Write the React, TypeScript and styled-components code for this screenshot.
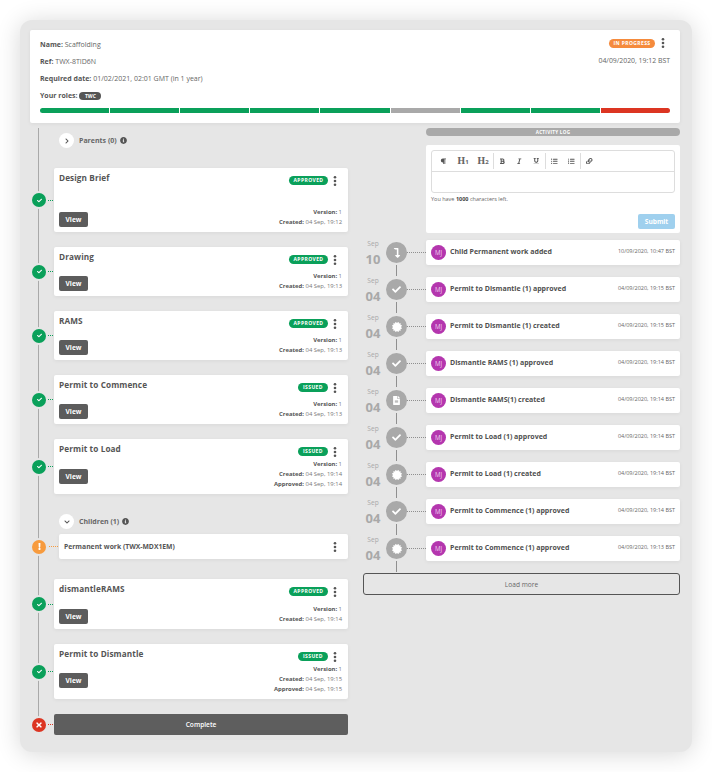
import React from "react";
import styled, { createGlobalStyle } from "styled-components";
import {
  FaBold,
  FaCertificate,
  FaCheck,
  FaChevronDown,
  FaChevronRight,
  FaExclamation,
  FaFileAlt,
  FaInfoCircle,
  FaItalic,
  FaLevelDownAlt,
  FaLink,
  FaListOl,
  FaListUl,
  FaParagraph,
  FaTimes,
  FaUnderline,
} from "react-icons/fa";

const GREEN = "#0aa05a";
const ORANGE = "#f79b3e";
const RED = "#dc3522";
const GREY = "#a9a9a9";

const GlobalStyle = createGlobalStyle`
  html, body {
    margin: 0;
    background: #fff;
  }
  body {
    font-family: "Open Sans", "Liberation Sans", sans-serif;
    color: #555;
  }
`;

const Page = styled.div`
  width: 712px;
  height: 772px;
  padding: 20px;
  box-sizing: border-box;
  overflow: hidden;
`;

const Panel = styled.div`
  height: 732px;
  padding: 10px 12px 10px 10px;
  box-sizing: border-box;
  background: #e6e6e6;
  border-radius: 12px;
  box-shadow: 0 2px 24px rgba(0, 0, 0, 0.16);
`;

const Header = styled.div`
  padding: 6px 10px 10px;
  background: #fff;
  border-radius: 2px;
  box-shadow: 0 1px 4px rgba(0, 0, 0, 0.06);
`;

const HeaderTop = styled.div`
  display: flex;
  justify-content: space-between;
`;

const InfoLine = styled.div`
  height: 17px;
  line-height: 17px;
  font-size: 7px;
  color: #666;
  white-space: nowrap;
  b {
    font-weight: 700;
    color: #555;
  }
`;

const RolePill = styled.span`
  display: inline-block;
  width: 22px;
  height: 8px;
  border-radius: 4px;
  background: #555;
  color: #fff;
  font-size: 5px;
  font-weight: 700;
  line-height: 8px;
  text-align: center;
  vertical-align: 0;
`;

const HeaderSide = styled.div`
  display: flex;
  flex-direction: column;
  align-items: flex-end;
`;

const StatusRow = styled.div`
  display: flex;
  align-items: center;
  gap: 6px;
  height: 12px;
  margin-top: 1px;
  padding-right: 5px;
`;

const Badge = styled.span<{ $color: string; $width: number }>`
  display: block;
  width: ${(p) => p.$width}px;
  height: 9px;
  border-radius: 5px;
  background: ${(p) => p.$color};
  color: #fff;
  font-size: 5px;
  font-weight: 700;
  letter-spacing: 0.4px;
  line-height: 9px;
  text-align: center;
`;

const HeaderDate = styled.div`
  margin-top: 7px;
  font-size: 6.9px;
  line-height: 10px;
  color: #666;
`;

const Progress = styled.div`
  display: flex;
  gap: 1px;
  height: 5px;
  margin-top: 4px;
  border-radius: 3px;
  overflow: hidden;
`;

const Segment = styled.div<{ $color: string }>`
  flex: 1;
  background: ${(p) => p.$color};
`;

const Columns = styled.div`
  display: grid;
  grid-template-columns: 318px 317px;
  gap: 15px;
  margin-top: 5px;
`;

const Flow = styled.div`
  position: relative;
  display: flex;
  flex-direction: column;
  gap: 15px;
  padding-top: 5px;
  &::before {
    content: "";
    position: absolute;
    left: 8px;
    top: 0;
    height: 595px;
    width: 1px;
    background: ${GREY};
  }
`;

const ToggleRow = styled.div`
  display: flex;
  align-items: center;
  height: 15px;
  margin-left: 29px;
  font-size: 7px;
  font-weight: 700;
  color: #666;
`;

const Toggle = styled.span`
  display: flex;
  align-items: center;
  justify-content: center;
  width: 15px;
  height: 15px;
  margin-right: 5px;
  border-radius: 50%;
  background: #fff;
  color: #555;
  font-size: 6px;
`;

const InfoIcon = styled(FaInfoCircle)`
  margin-left: 3px;
  font-size: 7px;
  color: #555;
`;

const ParentsGroup = styled.div`
  margin-bottom: 5px;
`;

const ChildrenGroup = styled.div`
  display: flex;
  flex-direction: column;
  gap: 5px;
  margin: 5px 0;
`;

const StepRow = styled.div`
  display: flex;
  align-items: center;
`;

const Node = styled.span<{ $color: string; $icon?: number }>`
  position: relative;
  z-index: 1;
  flex: none;
  display: flex;
  align-items: center;
  justify-content: center;
  width: 14px;
  height: 14px;
  margin-left: 2px;
  border-radius: 50%;
  background: ${(p) => p.$color};
  box-shadow: 0 0 0 2px #e6e6e6;
  color: #fff;
  font-size: ${(p) => p.$icon ?? 5}px;
`;

const Link = styled.span<{ $color: string; $wide?: boolean }>`
  flex: none;
  width: ${(p) => (p.$wide ? 9 : 5)}px;
  margin: 0 1px 0 ${(p) => (p.$wide ? 3 : 2)}px;
  border-top: 1px dotted ${(p) => p.$color};
`;

const StepCard = styled.div`
  flex: 1;
  display: flex;
  justify-content: space-between;
  padding: 5px 6px 5px 5px;
  background: #fff;
  border-radius: 2px;
  box-shadow: 0 1px 4px rgba(0, 0, 0, 0.06);
`;

const StepTitle = styled.div`
  height: 10px;
  font-size: 8.2px;
  font-weight: 700;
  line-height: 10px;
  letter-spacing: 0.1px;
  color: #555;
`;

const ViewButton = styled.button<{ $gap: number }>`
  display: block;
  width: 29px;
  height: 15px;
  margin-top: ${(p) => p.$gap}px;
  padding: 0;
  border: 0;
  border-radius: 2px;
  background: #5c5c5c;
  color: #fff;
  font-family: inherit;
  font-size: 6.6px;
  font-weight: 700;
`;

const StepSide = styled.div`
  display: flex;
  flex-direction: column;
  align-items: flex-end;
  justify-content: space-between;
`;

const BadgeRow = styled.div`
  display: flex;
  align-items: center;
  gap: 5px;
  height: 15px;
  padding-right: 5px;
`;

const Meta = styled.div`
  font-size: 5.9px;
  line-height: 10px;
  text-align: right;
  color: #777;
  b {
    font-weight: 700;
    color: #555;
  }
`;

const ChildCard = styled.div`
  flex: 1;
  display: flex;
  align-items: center;
  justify-content: space-between;
  height: 25px;
  padding: 0 11px 0 5px;
  background: #fff;
  border-radius: 2px;
  box-shadow: 0 1px 4px rgba(0, 0, 0, 0.06);
  font-size: 6.8px;
  font-weight: 700;
  color: #555;
`;

const CompleteButton = styled.button`
  flex: 1;
  height: 21px;
  padding: 0;
  border: 0;
  border-radius: 2px;
  background: #5e5e5e;
  color: #fff;
  font-family: inherit;
  font-size: 6.6px;
  font-weight: 600;
`;

const Activity = styled.div`
  display: flex;
  flex-direction: column;
`;

const LogBar = styled.div`
  align-self: flex-end;
  width: 254px;
  height: 8px;
  border-radius: 4px;
  background: ${GREY};
  color: #fff;
  font-size: 4.6px;
  font-weight: 700;
  letter-spacing: 0.3px;
  line-height: 8px;
  text-align: center;
`;

const EditorCard = styled.div`
  align-self: flex-end;
  width: 254px;
  height: 88px;
  margin-top: 9px;
  padding: 5px;
  box-sizing: border-box;
  background: #fff;
  border-radius: 2px;
`;

const Editor = styled.div`
  height: 43px;
  box-sizing: border-box;
  border: 1px solid #ddd;
  border-radius: 3px;
`;

const Toolbar = styled.div`
  display: flex;
  align-items: center;
  height: 20px;
  padding-left: 1px;
  border-bottom: 1px solid #ddd;
  color: #555;
`;

const Tool = styled.span<{ $wide?: boolean }>`
  display: flex;
  align-items: center;
  justify-content: center;
  width: ${(p) => (p.$wide ? 20 : 17)}px;
  height: 100%;
  font-size: 6.5px;
`;

const HeadingTool = styled.span`
  font-family: "DejaVu Serif", "Liberation Serif", serif;
  font-size: 8.5px;
  font-weight: 700;
  color: #666;
  small {
    font-family: "Open Sans", sans-serif;
    font-size: 6px;
  }
`;

const ToolDivider = styled.span`
  flex: none;
  width: 1px;
  height: 16px;
  background: #ddd;
`;

const CharsLeft = styled.div`
  margin-top: 2px;
  font-size: 5.5px;
  line-height: 8px;
  color: #666;
  b {
    font-weight: 700;
    color: #444;
  }
`;

const SubmitRow = styled.div`
  display: flex;
  justify-content: flex-end;
  margin-top: 11px;
`;

const SubmitButton = styled.button`
  width: 37px;
  height: 15px;
  padding: 0;
  border: 0;
  border-radius: 2px;
  background: #9fd0ee;
  color: #fff;
  font-family: inherit;
  font-size: 6.6px;
  font-weight: 700;
`;

const LogList = styled.div`
  display: flex;
  flex-direction: column;
  gap: 12px;
  margin-top: 7px;
`;

const LogRow = styled.div`
  display: flex;
  height: 25px;
`;

const DateCol = styled.div`
  flex: none;
  width: 20px;
  margin-right: 3px;
  text-align: center;
  color: ${GREY};
`;

const DateMonth = styled.div`
  font-size: 6.6px;
  line-height: 8px;
`;

const DateDay = styled.div`
  margin-top: 4px;
  font-size: 13px;
  font-weight: 700;
  line-height: 14px;
`;

const LogNode = styled.span`
  position: relative;
  flex: none;
  display: flex;
  align-items: center;
  justify-content: center;
  width: 21px;
  height: 21px;
  margin-top: 2px;
  border-radius: 50%;
  background: ${GREY};
  color: #fff;
  font-size: 9px;
  &::after {
    content: "";
    position: absolute;
    left: 10px;
    top: 23px;
    width: 1px;
    height: 11px;
    background: #8f8f8f;
  }
`;

const LogLink = styled.span`
  flex: none;
  align-self: center;
  width: 19px;
  border-top: 1px dotted #8f8f8f;
`;

const LogCard = styled.div`
  flex: 1;
  display: flex;
  align-items: center;
  gap: 4px;
  padding: 0 5px;
  background: #fff;
  border-radius: 2px;
  box-shadow: 0 1px 4px rgba(0, 0, 0, 0.06);
`;

const Avatar = styled.span`
  flex: none;
  width: 15px;
  height: 15px;
  border-radius: 50%;
  background: #b436ae;
  color: #f0d5ee;
  font-size: 6.2px;
  line-height: 15px;
  text-align: center;
`;

const LogText = styled.div`
  flex: 1;
  padding-bottom: 2px;
  font-size: 7px;
  font-weight: 700;
  color: #4f4f4f;
`;

const LogTime = styled.div`
  padding-bottom: 3px;
  font-size: 5.5px;
  color: #666;
`;

const LoadMore = styled.button`
  height: 22px;
  margin-top: 12px;
  padding: 0;
  box-sizing: border-box;
  border: 1px solid #555;
  border-radius: 3px;
  background: transparent;
  color: #666;
  font-family: inherit;
  font-size: 6.6px;
`;

const Kebab = () => (
  <svg width="4" height="10" viewBox="0 0 4 10" fill="#555">
    <circle cx="2" cy="1.3" r="1.3" />
    <circle cx="2" cy="5" r="1.3" />
    <circle cx="2" cy="8.7" r="1.3" />
  </svg>
);

const infoRows = [
  { label: "Name:", value: "Scaffolding" },
  { label: "Ref:", value: "TWX-8TID6N" },
  { label: "Required date:", value: "01/02/2021, 02:01 GMT (in 1 year)" },
];

const segments = [GREEN, GREEN, GREEN, GREEN, GREEN, GREY, GREEN, GREEN, RED];

type Step = {
  title: string;
  status: "APPROVED" | "ISSUED";
  created: string;
  approved?: string;
  viewGap: number;
};

const firstSteps: Step[] = [
  { title: "Design Brief", status: "APPROVED", created: "04 Sep, 19:12", viewGap: 29 },
  { title: "Drawing", status: "APPROVED", created: "04 Sep, 19:13", viewGap: 14 },
  { title: "RAMS", status: "APPROVED", created: "04 Sep, 19:13", viewGap: 14 },
  { title: "Permit to Commence", status: "ISSUED", created: "04 Sep, 19:13", viewGap: 14 },
  { title: "Permit to Load", status: "ISSUED", created: "04 Sep, 19:14", approved: "04 Sep, 19:14", viewGap: 15 },
];

const lastSteps: Step[] = [
  { title: "dismantleRAMS", status: "APPROVED", created: "04 Sep, 19:14", viewGap: 15 },
  { title: "Permit to Dismantle", status: "ISSUED", created: "04 Sep, 19:15", approved: "04 Sep, 19:15", viewGap: 14 },
];

const logIcons = {
  child: <FaLevelDownAlt size={10} />,
  check: <FaCheck />,
  cert: <FaCertificate size={10} />,
  file: <FaFileAlt />,
};

const logEntries: { month: string; day: string; icon: keyof typeof logIcons; text: string; time: string }[] = [
  { month: "Sep", day: "10", icon: "child", text: "Child Permanent work added", time: "10/09/2020, 10:47 BST" },
  { month: "Sep", day: "04", icon: "check", text: "Permit to Dismantle (1) approved", time: "04/09/2020, 19:15 BST" },
  { month: "Sep", day: "04", icon: "cert", text: "Permit to Dismantle (1) created", time: "04/09/2020, 19:15 BST" },
  { month: "Sep", day: "04", icon: "check", text: "Dismantle RAMS (1) approved", time: "04/09/2020, 19:14 BST" },
  { month: "Sep", day: "04", icon: "file", text: "Dismantle RAMS(1) created", time: "04/09/2020, 19:14 BST" },
  { month: "Sep", day: "04", icon: "check", text: "Permit to Load (1) approved", time: "04/09/2020, 19:14 BST" },
  { month: "Sep", day: "04", icon: "cert", text: "Permit to Load (1) created", time: "04/09/2020, 19:14 BST" },
  { month: "Sep", day: "04", icon: "check", text: "Permit to Commence (1) approved", time: "04/09/2020, 19:14 BST" },
  { month: "Sep", day: "04", icon: "cert", text: "Permit to Commence (1) approved", time: "04/09/2020, 19:13 BST" },
];

function StepItem({ step }: { step: Step }) {
  return (
    <StepRow>
      <Node $color={GREEN}>
        <FaCheck />
      </Node>
      <Link $color={GREEN} />
      <StepCard>
        <div>
          <StepTitle>{step.title}</StepTitle>
          <ViewButton $gap={step.viewGap}>View</ViewButton>
        </div>
        <StepSide>
          <BadgeRow>
            <Badge $color={GREEN} $width={step.status === "APPROVED" ? 39 : 30}>
              {step.status}
            </Badge>
            <Kebab />
          </BadgeRow>
          <Meta>
            <div>
              <b>Version:</b> 1
            </div>
            <div>
              <b>Created:</b> {step.created}
            </div>
            {step.approved && (
              <div>
                <b>Approved:</b> {step.approved}
              </div>
            )}
          </Meta>
        </StepSide>
      </StepCard>
    </StepRow>
  );
}

export default function App() {
  return (
    <Page>
      <GlobalStyle />
      <Panel>
        <Header>
          <HeaderTop>
            <div>
              {infoRows.map((row) => (
                <InfoLine key={row.label}>
                  <b>{row.label}</b> {row.value}
                </InfoLine>
              ))}
              <InfoLine>
                <b>Your roles:</b> <RolePill>TWC</RolePill>
              </InfoLine>
            </div>
            <HeaderSide>
              <StatusRow>
                <Badge $color="#f58b3d" $width={46}>
                  IN PROGRESS
                </Badge>
                <Kebab />
              </StatusRow>
              <HeaderDate>04/09/2020, 19:12 BST</HeaderDate>
            </HeaderSide>
          </HeaderTop>
          <Progress>
            {segments.map((color, i) => (
              <Segment key={i} $color={color} />
            ))}
          </Progress>
        </Header>

        <Columns>
          <Flow>
            <ParentsGroup>
              <ToggleRow>
                <Toggle>
                  <FaChevronRight />
                </Toggle>
                Parents (0)
                <InfoIcon />
              </ToggleRow>
            </ParentsGroup>
            {firstSteps.map((step) => (
              <StepItem key={step.title} step={step} />
            ))}
            <ChildrenGroup>
              <ToggleRow>
                <Toggle>
                  <FaChevronDown />
                </Toggle>
                Children (1)
                <InfoIcon />
              </ToggleRow>
              <StepRow>
                <Node $color={ORANGE} $icon={7}>
                  <FaExclamation />
                </Node>
                <Link $color={ORANGE} $wide />
                <ChildCard>
                  Permanent work (TWX-MDX1EM)
                  <Kebab />
                </ChildCard>
              </StepRow>
            </ChildrenGroup>
            {lastSteps.map((step) => (
              <StepItem key={step.title} step={step} />
            ))}
            <StepRow>
              <Node $color={RED} $icon={8}>
                <FaTimes />
              </Node>
              <Link $color={RED} />
              <CompleteButton>Complete</CompleteButton>
            </StepRow>
          </Flow>

          <Activity>
            <LogBar>ACTIVITY LOG</LogBar>
            <EditorCard>
              <Editor>
                <Toolbar>
                  <Tool $wide>
                    <FaParagraph />
                  </Tool>
                  <Tool $wide>
                    <HeadingTool>
                      H<small>1</small>
                    </HeadingTool>
                  </Tool>
                  <Tool $wide>
                    <HeadingTool>
                      H<small>2</small>
                    </HeadingTool>
                  </Tool>
                  <ToolDivider />
                  <Tool>
                    <FaBold />
                  </Tool>
                  <Tool>
                    <FaItalic />
                  </Tool>
                  <Tool>
                    <FaUnderline />
                  </Tool>
                  <ToolDivider />
                  <Tool>
                    <FaListUl />
                  </Tool>
                  <Tool>
                    <FaListOl />
                  </Tool>
                  <ToolDivider />
                  <Tool>
                    <FaLink />
                  </Tool>
                </Toolbar>
              </Editor>
              <CharsLeft>
                You have <b>1000</b> characters left.
              </CharsLeft>
              <SubmitRow>
                <SubmitButton>Submit</SubmitButton>
              </SubmitRow>
            </EditorCard>
            <LogList>
              {logEntries.map((entry, i) => (
                <LogRow key={i}>
                  <DateCol>
                    <DateMonth>{entry.month}</DateMonth>
                    <DateDay>{entry.day}</DateDay>
                  </DateCol>
                  <LogNode>{logIcons[entry.icon]}</LogNode>
                  <LogLink />
                  <LogCard>
                    <Avatar>MJ</Avatar>
                    <LogText>{entry.text}</LogText>
                    <LogTime>{entry.time}</LogTime>
                  </LogCard>
                </LogRow>
              ))}
            </LogList>
            <LoadMore>Load more</LoadMore>
          </Activity>
        </Columns>
      </Panel>
    </Page>
  );
}
